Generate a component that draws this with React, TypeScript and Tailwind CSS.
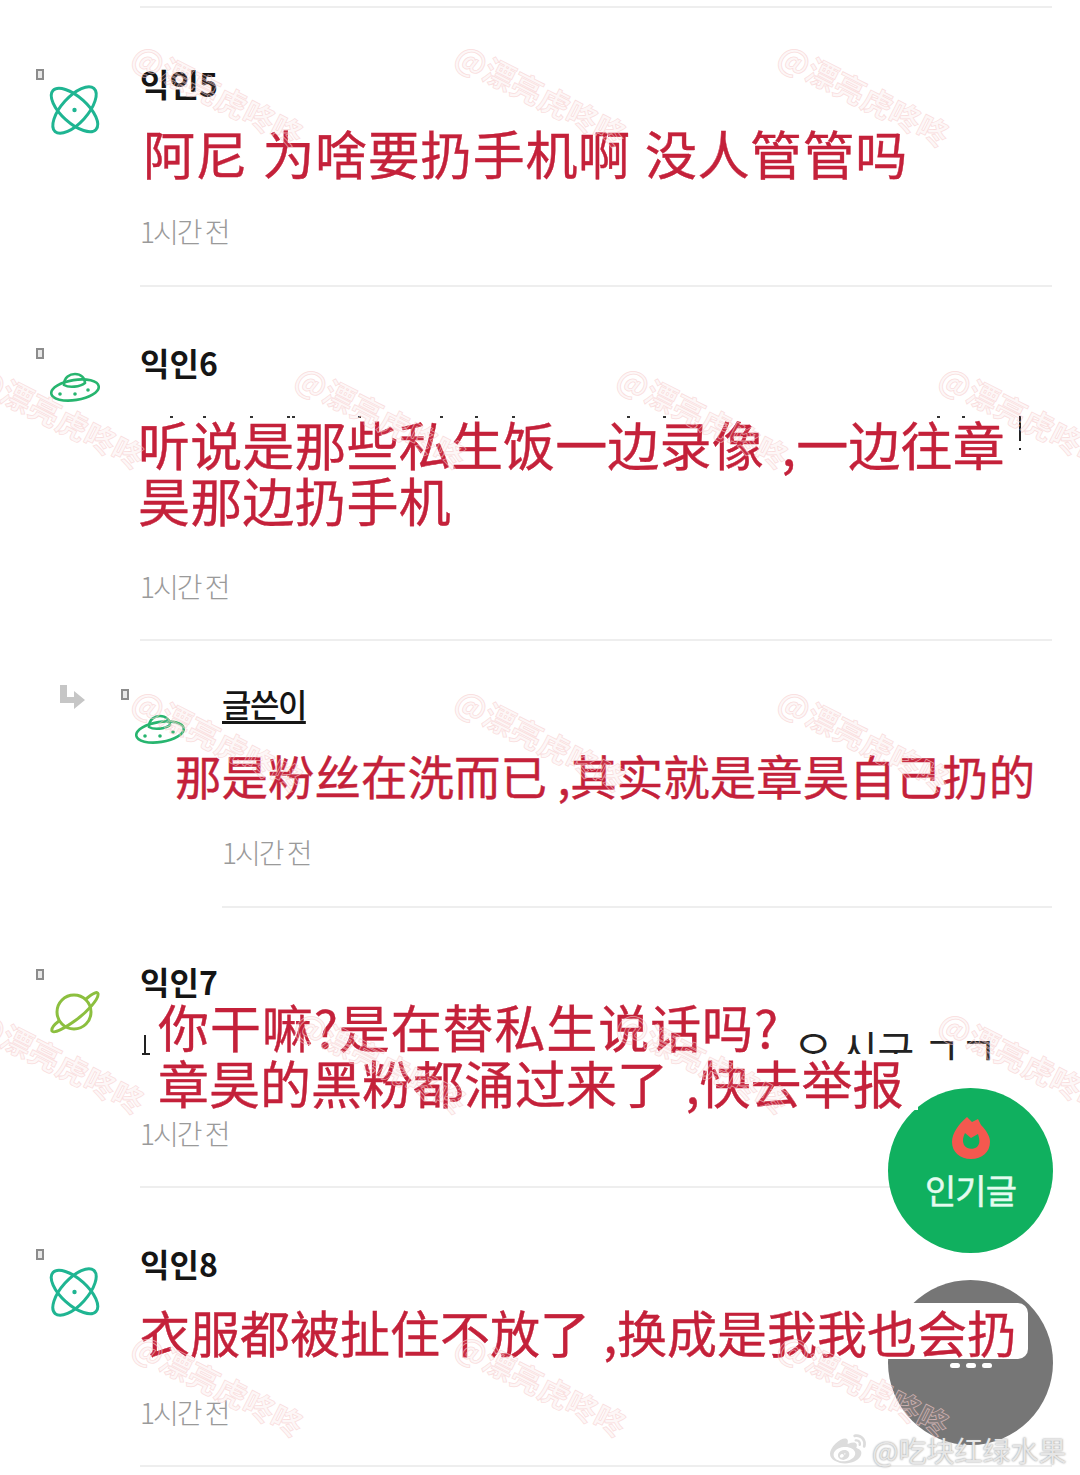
import { FaWeibo } from 'react-icons/fa';
import type { ReactNode } from 'react';

const WATERMARKS = [
  'left-[125px] top-[75px]',
  'left-[448px] top-[75px]',
  'left-[771px] top-[75px]',
  'left-[-34px] top-[397px]',
  'left-[288px] top-[397px]',
  'left-[610px] top-[397px]',
  'left-[932px] top-[397px]',
  'left-[125px] top-[720px]',
  'left-[448px] top-[720px]',
  'left-[771px] top-[720px]',
  'left-[-34px] top-[1042px]',
  'left-[288px] top-[1042px]',
  'left-[610px] top-[1042px]',
  'left-[932px] top-[1042px]',
  'left-[125px] top-[1365px]',
  'left-[448px] top-[1365px]',
  'left-[771px] top-[1365px]',
];

// tips of the covered line that still show above the red text
const TIPS = [
  'left-[30px]',
  'left-[63px]',
  'left-[110px]',
  'left-[147px]',
  'left-[152px]',
  'left-[218px]',
  'left-[300px]',
  'left-[335px]',
  'left-[372px]',
  'left-[487px]',
  'left-[523px]',
  'left-[797px]',
  'left-[822px]',
];

function AtomIcon() {
  return (
    <svg viewBox="0 0 50 50" className="w-[50px] h-[50px] overflow-visible" fill="none" stroke="#1fb592" strokeWidth="3">
      <ellipse cx="24.5" cy="25" rx="29" ry="13" transform="rotate(42 24.5 25)" />
      <ellipse cx="24.5" cy="25" rx="29" ry="13" transform="rotate(-48 24.5 25)" />
      <circle cx="24.5" cy="25" r="2.2" fill="#1fb592" stroke="none" />
    </svg>
  );
}

function UfoIcon() {
  return (
    <svg viewBox="0 0 50 50" className="w-[50px] h-[50px]" fill="none" stroke="#27b56f" strokeWidth="2.6">
      <ellipse cx="25" cy="27" rx="24" ry="10" transform="rotate(-9 25 27)" />
      <path d="M14 22 C14 14 20 11 25 11 C31 11 35 15 35 20 C30 24 19 25 14 22 Z" />
      <circle cx="10" cy="31" r="1.8" fill="#27b56f" stroke="none" />
      <circle cx="25" cy="31" r="1.8" fill="#27b56f" stroke="none" />
      <circle cx="38" cy="27" r="1.8" fill="#27b56f" stroke="none" />
    </svg>
  );
}

function PlanetIcon() {
  return (
    <svg viewBox="0 0 50 50" className="w-[50px] h-[50px]" fill="none" stroke="#8cbf3f" strokeWidth="3">
      <circle cx="24" cy="25" r="17" />
      <path d="M36 12 C43 6 48 4 48 7 C49 12 37 25 26 33 C15 41 4 47 2 44 C1 41 5 37 9 34" strokeLinecap="round" />
    </svg>
  );
}

function Tofu() {
  return <span className="block w-[8px] h-[11px] border-2 border-[#8c8c8c] bg-[#e8e8e8]" />;
}

function Name({ children }: { children: ReactNode }) {
  return <div className="h-[40px] text-[32px] leading-[40px] font-bold text-[#151515]">{children}</div>;
}

function Time({ className = '' }: { className?: string }) {
  return (
    <div className={`h-[40px] text-[28px] leading-[40px] font-light text-[#9a9a9a] tracking-[-2px] ${className}`}>
      1시간 전
    </div>
  );
}

const RED = 'text-[#c4213a] leading-[56px] [-webkit-text-stroke:0.4px_#c4213a]';

export default function App() {
  return (
    <div
      className="relative w-[1080px] h-[1475px] overflow-hidden bg-white pt-[6px]"
      style={{ fontFamily: '"Noto Sans CJK KR", "Noto Sans CJK SC", "Liberation Sans", sans-serif' }}
    >
      <div className="ml-[140px] mr-[28px] h-[2px] bg-[#eeeeee]" />

      {/* comment 5 */}
      <section className="flex pl-[36px] pr-[28px]">
        <div className="w-[104px] pt-[61px]">
          <Tofu />
          <div className="ml-[14px] mt-[5px]"><AtomIcon /></div>
        </div>
        <div className="flex-1 pt-[55px] pb-[34px] border-b-2 border-[#eeeeee]">
          <Name>익인5</Name>
          <p className={`mt-[22px] ml-[3px] text-[52px] whitespace-nowrap [word-spacing:2px] tracking-[0.6px] ${RED}`} lang="zh-CN">阿尼 为啥要扔手机啊 没人管管吗</p>
          <Time className="mt-[30px]" />
        </div>
      </section>

      {/* comment 6 */}
      <section className="flex pl-[36px] pr-[28px]">
        <div className="w-[104px] pt-[61px]">
          <Tofu />
          <div className="ml-[14px] mt-[4px]"><UfoIcon /></div>
        </div>
        <div className="flex-1 pt-[55px] pb-[33px] border-b-2 border-[#eeeeee]">
          <Name>익인6</Name>
          <div className="relative mt-[34px]">
            {TIPS.map((pos) => (
              <span key={pos} className={`absolute ${pos} top-0 w-[3px] h-[2px] bg-[#333333]`} />
            ))}
            <span className="absolute left-[879px] top-0 w-[2px] h-[25px] bg-[#222222]" />
            <span className="absolute left-[879px] top-[32px] w-[2px] h-[2px] bg-[#222222]" />
            <p className={`-ml-[2px] text-[52px] w-[890px] [word-spacing:6px] tracking-[0.15px] ${RED}`} lang="zh-CN">听说是那些私生饭一边录像 ,一边往章昊那边扔手机</p>
          </div>
          <Time className="mt-[38px]" />
        </div>
      </section>

      {/* reply from the author */}
      <section className="flex pl-[60px] pr-[28px]">
        <div className="w-[61px] pt-[44px]">
          <svg viewBox="0 0 25 24" className="w-[25px] h-[24px]" fill="#c6c6c6">
            <path d="M0 0 H7 V12 H14 V6 L25 15 L14 24 V18 H0 Z" />
          </svg>
        </div>
        <div className="w-[101px] pt-[48px]">
          <Tofu />
          <div className="ml-[14px] mt-[5px]"><UfoIcon /></div>
        </div>
        <div className="flex-1 pt-[42px] pb-[34px] border-b-2 border-[#eeeeee]">
          <Name><span className="underline underline-offset-[4px] font-medium tracking-[-1.5px]">글쓴이</span></Name>
          <p className={`mt-[24px] -ml-[47px] text-[46.5px] whitespace-nowrap ${RED}`} lang="zh-CN">那是粉丝在洗而已 ,其实就是章昊自己扔的</p>
          <Time className="mt-[29px]" />
        </div>
      </section>

      {/* comment 7 */}
      <section className="flex pl-[36px] pr-[28px]">
        <div className="w-[104px] pt-[61px]">
          <Tofu />
          <div className="ml-[14px] mt-[7px]"><PlanetIcon /></div>
        </div>
        <div className="flex-1 pt-[53px] pb-[33px] border-b-2 border-[#eeeeee]">
          <Name>익인7</Name>
          <div className="relative">
            <span className="absolute left-[4px] top-[37px] w-[2px] h-[18px] bg-[#222222]" />
            <span className="absolute left-[2px] top-[55px] w-[8px] h-[2px] bg-[#222222]" />
            <span className="absolute left-[655px] top-[32px] text-[40px] leading-[36px] whitespace-nowrap text-[#222222]">오 시구 ㄱㄱ</span>
            <div className={`relative z-20 -mt-[3px] text-[51px] [word-spacing:6px] ${RED}`} lang="zh-CN">
              <p className="w-fit ml-[10px] pl-[8px] pr-[10px] bg-white tracking-[0.9px]">你干嘛?是在替私生说话吗?</p>
              <p className="w-fit ml-[10px] pl-[8px] pr-[14px] bg-white">章昊的黑粉都涌过来了 ,快去举报</p>
            </div>
          </div>
          <Time className="mt-[3px]" />
        </div>
      </section>

      {/* comment 8 */}
      <section className="flex pl-[36px] pr-[28px]">
        <div className="w-[104px] pt-[61px]">
          <Tofu />
          <div className="ml-[14px] mt-[7px]"><AtomIcon /></div>
        </div>
        <div className="flex-1 pt-[55px] pb-[33px] border-b-2 border-[#eeeeee]">
          <Name>익인8</Name>
          <p className={`relative z-20 mt-[20px] w-[888px] rounded-[10px] bg-white text-[50px] whitespace-nowrap [word-spacing:2px] ${RED}`} lang="zh-CN">衣服都被扯住不放了 ,换成是我我也会扔</p>
          <Time className="mt-[33px]" />
        </div>
      </section>

      {/* floating buttons */}
      <div className="absolute z-10 left-[888px] top-[1088px] w-[165px] h-[165px] rounded-full bg-[#10b05f] flex flex-col items-center pt-[28px]">
        <svg viewBox="0 0 40 44" className="w-[40px] h-[44px]">
          <path d="M16 1 L21 6 L27 3 L30 9 C36 15 39 21 39 26 C39 36 31 43 20 43 C9 43 1 36 1 26 C1 17 8 8 16 1 Z" fill="#f4584f" />
          <path d="M14 17 L20 22 L27 18 C29 24 29 28 26 31 C22 34 15 33 13 29 C11 25 12 21 14 17 Z" fill="#10b05f" />
        </svg>
        <span className="mt-[8px] text-[34px] leading-[44px] text-[#e4fbef] tracking-[-1px] [-webkit-text-stroke:0.5px_#e4fbef]">인기글</span>
      </div>
      <div className="absolute z-10 left-[888px] top-[1280px] w-[165px] h-[165px] rounded-full bg-[#767676] flex justify-center pt-[83px] gap-[6px]">
        <span className="w-[10px] h-[5px] rounded-full bg-white" />
        <span className="w-[10px] h-[5px] rounded-full bg-white" />
        <span className="w-[10px] h-[5px] rounded-full bg-white" />
      </div>

      {/* watermarks */}
      {WATERMARKS.map((pos) => (
        <span
          key={pos}
          lang="zh-CN"
          className={`absolute z-30 ${pos} w-[188px] h-[40px] rotate-[27deg] text-[31px] leading-[40px] font-bold whitespace-nowrap text-[#f4b0b0]/10 [-webkit-text-stroke:0.8px_#f7cfcfaa]`}
        >
          @漂亮虎咚咚
        </span>
      ))}

      <div className="absolute z-40 left-[828px] top-[1430px] flex items-center gap-[4px]">
        <FaWeibo className="w-[40px] h-[36px] text-[#dcdcdc]" />
        <span lang="zh-CN" className="text-[28px] leading-[40px] whitespace-nowrap text-[#e6e6e6] [text-shadow:0_0_2px_#8a8a8a]">
          @吃块红绿水果
        </span>
      </div>
    </div>
  );
}
